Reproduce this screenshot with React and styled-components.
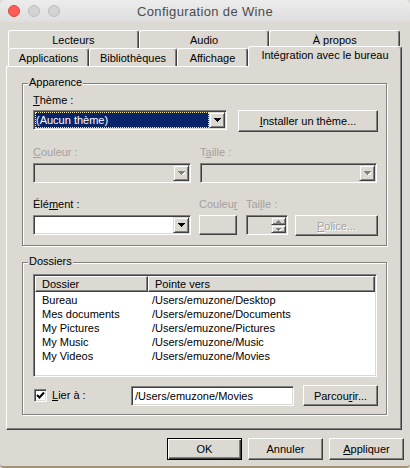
import React from "react";
import styled, { createGlobalStyle, css } from "styled-components";

const face = "#dcd9d3";
const shadow = "#808080";
const dark = "#404040";
const greyText = "#a3a19c";
const ui = `"Liberation Sans", Arial, sans-serif`;

const GlobalStyle = createGlobalStyle`
  html, body {
    margin: 0;
    padding: 0;
    background: ${face};
  }
  body {
    font-family: ${ui};
    font-size: 11px;
    color: #000;
  }
`;

const raised = css`
  border: 1px solid;
  border-color: #fff ${dark} ${dark} #fff;
  box-shadow: inset -1px -1px ${shadow};
`;

const sunken = css`
  border: 1px solid;
  border-color: ${shadow} #fff #fff ${shadow};
  box-shadow: inset 1px 1px ${dark}, inset -1px -1px ${face};
`;

const Window = styled.div`
  width: 410px;
  height: 468px;
  box-sizing: border-box;
  display: flex;
  flex-direction: column;
  background: ${face};
  border-radius: 5px 5px 4px 4px;
  border-bottom: 2px solid #a39377;
  overflow: hidden;
`;

const TitleBar = styled.div`
  flex: none;
  height: 22px;
  display: grid;
  grid-template-columns: 1fr auto 1fr;
  align-items: center;
  background: linear-gradient(#ececec, #dedede);
`;

const Lights = styled.div`
  display: flex;
  gap: 8px;
  padding-left: 8px;
`;

const Light = styled.span`
  width: 12px;
  height: 12px;
  box-sizing: border-box;
  border-radius: 50%;
  background: ${({ $fill }) => $fill};
  border: 1px solid ${({ $edge }) => $edge};
`;

const Title = styled.div`
  font: 13px ${ui};
  letter-spacing: 0.35px;
  color: #4c4c4c;
`;

const TabStrip = styled.div`
  position: relative;
  z-index: 1;
  display: flex;
  flex-direction: column;
  padding: 8px 0 0 8px;
`;

const TabRow = styled.div`
  display: flex;
  align-items: flex-end;
  height: 18px;
  width: ${({ $w }) => ($w ? `${$w}px` : "auto")};
`;

const Tab = styled.div`
  box-sizing: border-box;
  flex: ${({ $w }) => ($w ? `0 0 ${$w}px` : "1 1 0")};
  height: 18px;
  display: flex;
  align-items: center;
  justify-content: center;
  white-space: nowrap;
  background: ${face};
  border: 1px solid;
  border-color: #fff ${dark} transparent #fff;
  border-bottom: 0;
  border-radius: 3px 3px 0 0;
  box-shadow: inset -1px 0 ${shadow};
  padding-top: 1px;

  ${({ $active }) =>
    $active &&
    css`
      height: 21px;
      margin-bottom: -1px;
      padding: 0 0 4px;
    `}
`;

const Panel = styled.div`
  box-sizing: border-box;
  height: 364px;
  margin: 0 8px 0 6px;
  padding: 16px 0 0 15px;
  display: flex;
  flex-direction: column;
  gap: 16px;
  ${raised};
`;

const Group = styled.div`
  position: relative;
  box-sizing: border-box;
  width: 365px;
  height: ${({ $h }) => $h}px;
  padding: ${({ $pt }) => $pt}px 0 0 10px;
  border: 1px solid ${shadow};
  box-shadow: inset 1px 1px #fff, 1px 1px #fff;
`;

const Legend = styled.span`
  position: absolute;
  top: -8px;
  left: 5px;
  padding: 0 1px;
  line-height: 13px;
  background: ${face};
`;

const Line = styled.div`
  display: flex;
  align-items: ${({ $center }) => ($center ? "center" : "flex-start")};
  margin-top: ${({ $mt }) => $mt || 0}px;
`;

const Label = styled.div`
  flex: none;
  width: ${({ $w }) => ($w ? `${$w}px` : "auto")};
  margin-left: ${({ $ml }) => $ml || 0}px;
  height: 13px;
  line-height: 13px;
  white-space: nowrap;
  color: ${({ $disabled }) => ($disabled ? greyText : "#000")};
`;

const U = styled.span`
  text-decoration: underline;
  text-underline-offset: 1px;
`;

const Combo = styled.div`
  box-sizing: border-box;
  flex: none;
  width: ${({ $w }) => $w}px;
  height: 20px;
  margin-left: ${({ $ml }) => $ml || 0}px;
  padding: 1px;
  display: flex;
  background: ${({ $disabled }) => ($disabled ? face : "#fff")};
  ${sunken};
`;

const ComboText = styled.div`
  flex: 1;
  min-width: 0;
  padding-left: 2px;
  line-height: 16px;
  white-space: nowrap;

  ${({ $selected }) =>
    $selected &&
    css`
      padding-left: 1px;
      background: #0a246a;
      color: #fff;
      outline: 1px dotted #f3e9a8;
      outline-offset: -1px;
    `}
`;

const ScrollBtn = styled.div`
  box-sizing: border-box;
  flex: 1 0 auto;
  width: ${({ $w }) => $w}px;
  height: ${({ $h }) => $h}px;
  display: flex;
  align-items: center;
  justify-content: center;
  background: ${face};
  border: 1px solid;
  border-color: ${face} ${dark} ${dark} ${face};
  box-shadow: inset 1px 1px #fff, inset -1px -1px ${shadow};
`;

const Arrow = ({ up, disabled, size = 7 }) => {
  const h = Math.ceil(size / 2);
  const pts = up ? `0,${h} ${size},${h} ${size / 2},0` : `0,0 ${size},0 ${size / 2},${h}`;
  return (
    <svg width={size} height={h} style={{ display: "block" }}>
      {disabled && (
        <polygon points={pts} transform="translate(1,1)" fill="#fff" shapeRendering="crispEdges" />
      )}
      <polygon points={pts} fill={disabled ? shadow : "#000"} shapeRendering="crispEdges" />
    </svg>
  );
};

const Button = styled.button`
  box-sizing: border-box;
  flex: none;
  width: ${({ $w }) => $w}px;
  height: ${({ $h }) => $h || 22}px;
  margin: 0 0 0 ${({ $ml }) => $ml || 0}px;
  padding: 0;
  display: flex;
  align-items: center;
  justify-content: center;
  font: 11px ${ui};
  color: #000;
  background: ${face};
  ${raised};

  &:disabled {
    color: ${greyText};
    text-shadow: 1px 1px #fff;
  }

  ${({ $default }) =>
    $default &&
    css`
      border-color: #000;
      box-shadow: inset 1px 1px #fff, inset -1px -1px ${dark}, inset -2px -2px ${shadow};
    `}
`;

const Spin = styled.div`
  box-sizing: border-box;
  flex: none;
  width: 42px;
  height: 20px;
  margin-left: 9px;
  padding: 1px;
  display: flex;
  justify-content: flex-end;
  background: ${face};
  ${sunken};
`;

const SpinStack = styled.div`
  display: flex;
  flex-direction: column;
  width: 15px;
`;

const ListView = styled.div`
  box-sizing: border-box;
  width: 344px;
  height: 103px;
  padding: 1px;
  display: flex;
  flex-direction: column;
  background: #fff;
  ${sunken};
`;

const Header = styled.div`
  flex: none;
  display: flex;
  height: 16px;
`;

const HeaderCell = styled.div`
  box-sizing: border-box;
  flex: ${({ $w }) => ($w ? `0 0 ${$w}px` : "1")};
  padding-left: 6px;
  line-height: 14px;
  background: ${face};
  ${raised};
`;

const Rows = styled.div`
  padding-top: 1px;
`;

const Row = styled.div`
  display: flex;
  height: 14px;
  line-height: 14px;
  white-space: nowrap;
`;

const Cell = styled.div`
  box-sizing: border-box;
  flex: ${({ $w }) => ($w ? `0 0 ${$w}px` : "1")};
  padding-left: ${({ $pl }) => $pl}px;
`;

const CheckBox = styled.div`
  box-sizing: border-box;
  flex: none;
  width: 13px;
  height: 13px;
  margin-left: 1px;
  display: flex;
  align-items: center;
  justify-content: center;
  background: #fff;
  ${sunken};
`;

const Edit = styled.div`
  box-sizing: border-box;
  flex: none;
  width: 163px;
  height: 20px;
  padding: 1px 0 0 3px;
  line-height: 16px;
  background: #fff;
  ${sunken};
`;

const ButtonBar = styled.div`
  display: flex;
  justify-content: flex-end;
  gap: 6px;
  padding: 8px 6px 0 0;
`;

const folders = [
  ["Bureau", "/Users/emuzone/Desktop"],
  ["Mes documents", "/Users/emuzone/Documents"],
  ["My Pictures", "/Users/emuzone/Pictures"],
  ["My Music", "/Users/emuzone/Music"],
  ["My Videos", "/Users/emuzone/Movies"],
];

const DropCombo = ({ w, ml, disabled, selected, children }) => (
  <Combo $w={w} $ml={ml} $disabled={disabled}>
    <ComboText $selected={selected}>{children}</ComboText>
    <ScrollBtn $w={16} $h={16} style={{ flex: "none" }}>
      <Arrow disabled={disabled} />
    </ScrollBtn>
  </Combo>
);

export default function App() {
  return (
    <>
      <GlobalStyle />
      <Window>
        <TitleBar>
          <Lights>
            <Light $fill="#fc5f57" $edge="#de4640" />
            <Light $fill="#d3d3d3" $edge="#bcbcbc" />
            <Light $fill="#d3d3d3" $edge="#bcbcbc" />
          </Lights>
          <Title>Configuration de Wine</Title>
          <span />
        </TitleBar>

        <TabStrip>
          <TabRow $w={392}>
            <Tab>Lecteurs</Tab>
            <Tab>Audio</Tab>
            <Tab>À propos</Tab>
          </TabRow>
          <TabRow>
            <Tab $w={81}>Applications</Tab>
            <Tab $w={88}>Bibliothèques</Tab>
            <Tab $w={71}>Affichage</Tab>
            <Tab $w={154} $active>
              Intégration avec le bureau
            </Tab>
          </TabRow>
        </TabStrip>

        <Panel>
          <Group $h={163} $pt={10}>
            <Legend>Apparence</Legend>
            <Label>
              <U>T</U>hème :
            </Label>
            <Line $mt={3}>
              <DropCombo w={194} selected>
                (Aucun thème)
              </DropCombo>
              <Button $w={140} $h={22} $ml={11}>
                <span>
                  <U>I</U>nstaller un thème...
                </span>
              </Button>
            </Line>
            <Line $mt={14}>
              <Label $w={167} $disabled>
                <U>C</U>ouleur :
              </Label>
              <Label $disabled>
                T<U>a</U>ille :
              </Label>
            </Line>
            <Line $mt={4}>
              <DropCombo w={158} disabled />
              <DropCombo w={177} ml={9} disabled />
            </Line>
            <Line $mt={15}>
              <Label $w={166}>
                Élé<U>m</U>ent :
              </Label>
              <Label $w={47} $disabled>
                Couleu<U>r</U>
              </Label>
              <Label $disabled>
                Tai<U>l</U>le :
              </Label>
            </Line>
            <Line $mt={4}>
              <DropCombo w={158} />
              <Button $w={38} $h={20} $ml={8} />
              <Spin>
                <SpinStack>
                  <ScrollBtn $w={15} $h={8}>
                    <Arrow up disabled size={5} />
                  </ScrollBtn>
                  <ScrollBtn $w={15} $h={8}>
                    <Arrow disabled size={5} />
                  </ScrollBtn>
                </SpinStack>
              </Spin>
              <Button $w={83} $h={21} $ml={7} disabled>
                <span>
                  <U>P</U>olice...
                </span>
              </Button>
            </Line>
          </Group>

          <Group $h={153} $pt={11}>
            <Legend>Dossiers</Legend>
            <ListView>
              <Header>
                <HeaderCell $w={113}>Dossier</HeaderCell>
                <HeaderCell>Pointe vers</HeaderCell>
              </Header>
              <Rows>
                {folders.map(([name, path]) => (
                  <Row key={name}>
                    <Cell $w={113} $pl={7}>
                      {name}
                    </Cell>
                    <Cell $pl={4}>{path}</Cell>
                  </Row>
                ))}
              </Rows>
            </ListView>
            <Line $mt={8} $center>
              <CheckBox>
                <svg width="9" height="9" viewBox="0 0 9 9">
                  <polyline points="1,4 3.5,6.5 8,1.5" fill="none" stroke="#000" strokeWidth="2" />
                </svg>
              </CheckBox>
              <Label $w={79} $ml={5}>
                <U>L</U>ier à :
              </Label>
              <Edit>/Users/emuzone/Movies</Edit>
              <Button $w={75} $h={21} $ml={9}>
                <span>
                  Parcou<U>r</U>ir...
                </span>
              </Button>
            </Line>
          </Group>
        </Panel>

        <ButtonBar>
          <Button $w={75} $h={22} $default>
            OK
          </Button>
          <Button $w={75} $h={22}>
            Annuler
          </Button>
          <Button $w={75} $h={22}>
            <span>
              <U>A</U>ppliquer
            </span>
          </Button>
        </ButtonBar>
      </Window>
    </>
  );
}
